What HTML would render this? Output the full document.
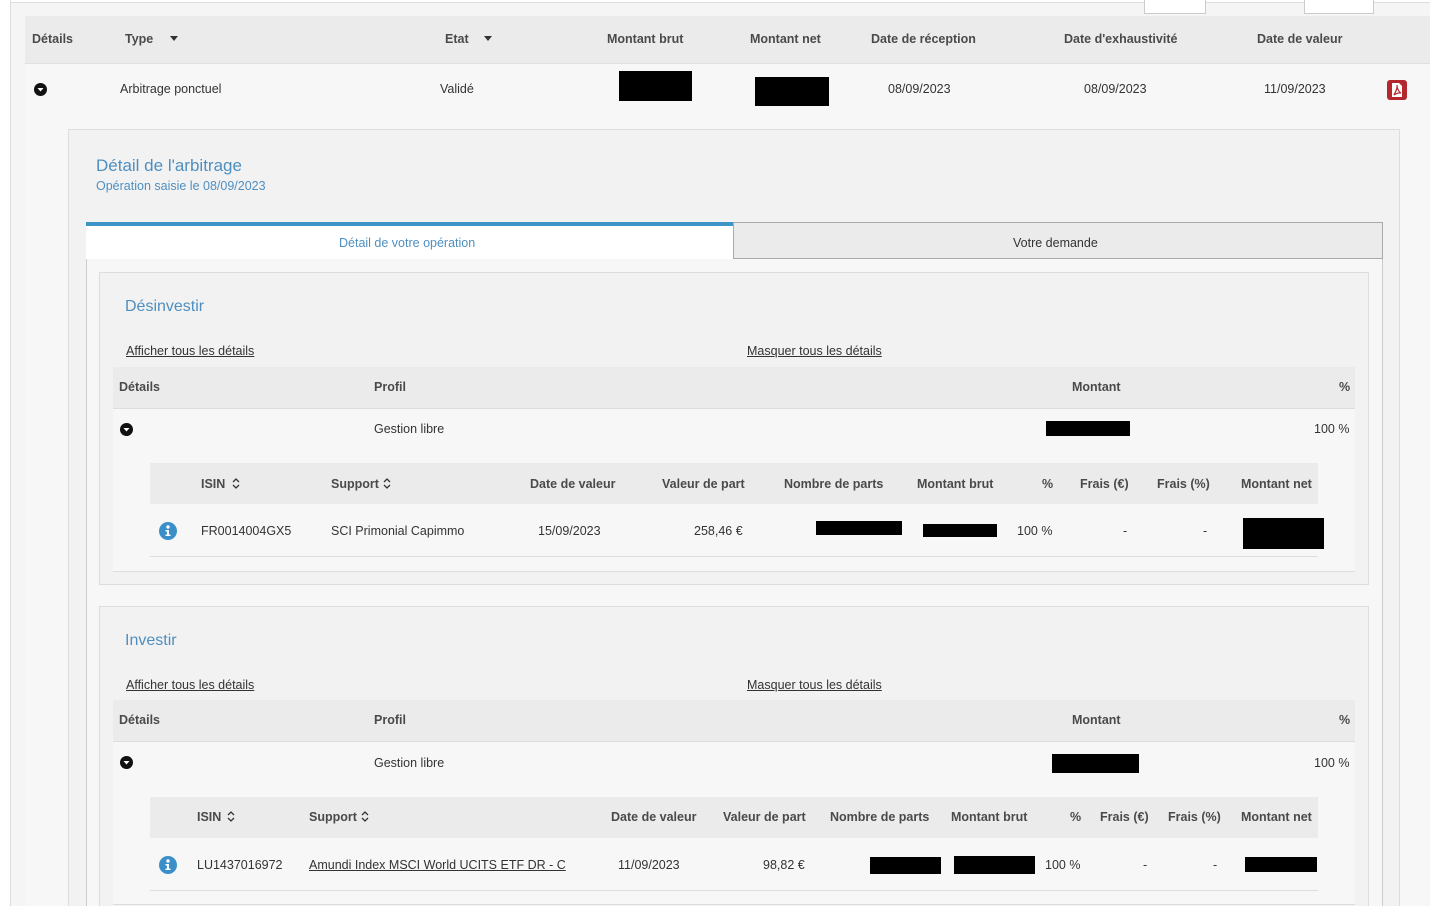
<!DOCTYPE html>
<html><head><meta charset="utf-8">
<style>
*{margin:0;padding:0;box-sizing:border-box}
html,body{width:1430px;height:906px;overflow:hidden}
body{background:#f5f5f5;font-family:"Liberation Sans",Arial,sans-serif;position:relative}
.a{position:absolute}
.t{position:absolute;line-height:16px;white-space:nowrap;font-size:12.5px;color:#333}
.h{font-weight:bold;color:#4a4a4a;font-size:12.5px}
.bk{position:absolute;background:#000}
.u{text-decoration:underline}
.blue{color:#4f8fc0}
</style></head><body>
<div class="a" style="left:0;top:0;width:10px;height:906px;background:#fff"></div>
<div class="a" style="left:10px;top:0;width:1px;height:906px;background:#ddd"></div>
<div class="a" style="left:11px;top:0;width:1419px;height:2px;background:#fff"></div>
<div class="a" style="left:11px;top:2px;width:1419px;height:1px;background:#ddd"></div>
<div class="a" style="left:1144px;top:0;width:62px;height:14px;background:#fff;border:1px solid #ccc;border-top:none"></div>
<div class="a" style="left:1304px;top:0;width:70px;height:14px;background:#fff;border:1px solid #ccc;border-top:none"></div>

<div class="a" style="left:25px;top:16px;width:1405px;height:47px;background:#ebebeb"></div>
<div class="a" style="left:25px;top:63px;width:1405px;height:1px;background:#e0e0e0"></div>
<div class="t h" style="left:32px;top:31px">Détails</div>
<div class="t h" style="left:125px;top:31px">Type</div>
<svg class="a" style="left:170px;top:36px" width="8" height="5"><path d="M0 0H8L4 5Z" fill="#333"/></svg>
<div class="t h" style="left:445px;top:31px">Etat</div>
<svg class="a" style="left:484px;top:36px" width="8" height="5"><path d="M0 0H8L4 5Z" fill="#333"/></svg>
<div class="t h" style="left:607px;top:31px">Montant brut</div>
<div class="t h" style="left:750px;top:31px">Montant net</div>
<div class="t h" style="left:871px;top:31px">Date de réception</div>
<div class="t h" style="left:1064px;top:31px">Date d'exhaustivité</div>
<div class="t h" style="left:1257px;top:31px">Date de valeur</div>

<div class="a" style="left:25px;top:64px;width:1405px;height:842px;background:#f7f7f7"></div>
<svg class="a" style="left:34px;top:83px" width="13" height="13"><circle cx="6.5" cy="6.5" r="6.5" fill="#111"/><path d="M3.5 5H9.5L6.5 8.5Z" fill="#fff"/></svg>
<div class="t" style="left:120px;top:81px">Arbitrage ponctuel</div>
<div class="t" style="left:440px;top:81px">Validé</div>
<div class="bk" style="left:619px;top:71px;width:73px;height:30px"></div>
<div class="bk" style="left:755px;top:77px;width:74px;height:29px"></div>
<div class="t" style="left:888px;top:81px">08/09/2023</div>
<div class="t" style="left:1084px;top:81px">08/09/2023</div>
<div class="t" style="left:1264px;top:81px">11/09/2023</div>
<svg class="a" style="left:1387px;top:80px" width="20" height="20"><rect x="0" y="0" width="20" height="20" rx="3" fill="#b3272d"/><path d="M5 3H12L15 6V17H5Z" fill="#fff"/><path d="M7 15C9 11 10.5 8 10 5C10 9 12 12 14 13C11 12.5 9 13.5 7 15Z" fill="none" stroke="#b3272d" stroke-width="1.2"/></svg>

<div class="a" style="left:68px;top:129px;width:1332px;height:800px;background:#f2f2f2;border:1px solid #ddd"></div>
<div class="t blue" style="left:96px;top:156px;font-size:17px;line-height:20px">Détail de l'arbitrage</div>
<div class="t blue" style="left:96px;top:178px;font-size:12.5px">Opération saisie le 08/09/2023</div>

<div class="a" style="left:86px;top:258px;width:1297px;height:680px;background:#f7f7f7;border:1px solid #ccc;border-top:none"></div>
<div class="a" style="left:86px;top:222px;width:648px;height:37px;background:#fff;border-top:4px solid #3d94c6"></div>
<div class="t blue" style="left:339px;top:235px">Détail de votre opération</div>
<div class="a" style="left:733px;top:222px;width:650px;height:37px;background:#ebebeb;border:1px solid #aaa"></div>
<div class="t" style="left:1013px;top:235px">Votre demande</div>

<div class="a" style="left:99px;top:272px;width:1270px;height:313px;background:#f2f2f2;border:1px solid #ddd"></div>
<div class="t blue" style="left:125px;top:298px;font-size:16px;line-height:18px">Désinvestir</div>
<div class="t u" style="left:126px;top:343px">Afficher tous les détails</div>
<div class="t u" style="left:747px;top:343px">Masquer tous les détails</div>
<div class="a" style="left:113px;top:367px;width:1242px;height:41px;background:#ebebeb"></div>
<div class="a" style="left:113px;top:408px;width:1242px;height:164px;background:#f7f7f7;border-top:1px solid #ddd;border-bottom:1px solid #ddd"></div>
<div class="t h" style="left:119px;top:379px">Détails</div>
<div class="t h" style="left:374px;top:379px">Profil</div>
<div class="t h" style="left:1072px;top:379px">Montant</div>
<div class="t h" style="left:1339px;top:379px">%</div>
<svg class="a" style="left:120px;top:423px" width="13" height="13"><circle cx="6.5" cy="6.5" r="6.5" fill="#111"/><path d="M3.5 5H9.5L6.5 8.5Z" fill="#fff"/></svg>
<div class="t" style="left:374px;top:421px">Gestion libre</div>
<div class="bk" style="left:1046px;top:421px;width:84px;height:15px"></div>
<div class="t" style="left:1314px;top:421px">100 %</div>
<div class="a" style="left:150px;top:463px;width:1168px;height:41px;background:#ebebeb"></div>
<div class="a" style="left:150px;top:556px;width:1168px;height:1px;background:#ddd"></div>
<div class="t h" style="left:201px;top:476px">ISIN</div>
<svg class="a" style="left:232px;top:478px" width="8" height="11"><path d="M1 4L4 1L7 4M1 7L4 10L7 7" fill="none" stroke="#333" stroke-width="1.3"/></svg>
<div class="t h" style="left:331px;top:476px">Support</div>
<svg class="a" style="left:383px;top:478px" width="8" height="11"><path d="M1 4L4 1L7 4M1 7L4 10L7 7" fill="none" stroke="#333" stroke-width="1.3"/></svg>
<div class="t h" style="left:530px;top:476px">Date de valeur</div>
<div class="t h" style="left:662px;top:476px">Valeur de part</div>
<div class="t h" style="left:784px;top:476px">Nombre de parts</div>
<div class="t h" style="left:917px;top:476px">Montant brut</div>
<div class="t h" style="left:1042px;top:476px">%</div>
<div class="t h" style="left:1080px;top:476px">Frais (€)</div>
<div class="t h" style="left:1157px;top:476px">Frais (%)</div>
<div class="t h" style="left:1241px;top:476px">Montant net</div>
<svg class="a" style="left:159px;top:522px" width="18" height="18"><circle cx="9" cy="9" r="9" fill="#3b8fc9"/><circle cx="9" cy="5" r="1.7" fill="#fff"/><path d="M6.5 8H10V12.5H11.5V14H6.5V12.5H8V9.5H6.5Z" fill="#fff"/></svg>
<div class="t" style="left:201px;top:523px">FR0014004GX5</div>
<div class="t" style="left:331px;top:523px">SCI Primonial Capimmo</div>
<div class="t" style="left:538px;top:523px">15/09/2023</div>
<div class="t" style="left:694px;top:523px">258,46 €</div>
<div class="bk" style="left:816px;top:521px;width:86px;height:14px"></div>
<div class="bk" style="left:923px;top:524px;width:74px;height:13px"></div>
<div class="t" style="left:1017px;top:523px">100 %</div>
<div class="t" style="left:1123px;top:523px">-</div>
<div class="t" style="left:1203px;top:523px">-</div>
<div class="bk" style="left:1243px;top:518px;width:81px;height:31px"></div>

<div class="a" style="left:99px;top:606px;width:1270px;height:330px;background:#f2f2f2;border:1px solid #ddd"></div>
<div class="t blue" style="left:125px;top:632px;font-size:16px;line-height:18px">Investir</div>
<div class="t u" style="left:126px;top:677px">Afficher tous les détails</div>
<div class="t u" style="left:747px;top:677px">Masquer tous les détails</div>
<div class="a" style="left:113px;top:700px;width:1242px;height:41px;background:#ebebeb"></div>
<div class="a" style="left:113px;top:741px;width:1242px;height:164px;background:#f7f7f7;border-top:1px solid #ddd;border-bottom:1px solid #ddd"></div>
<div class="t h" style="left:119px;top:712px">Détails</div>
<div class="t h" style="left:374px;top:712px">Profil</div>
<div class="t h" style="left:1072px;top:712px">Montant</div>
<div class="t h" style="left:1339px;top:712px">%</div>
<svg class="a" style="left:120px;top:756px" width="13" height="13"><circle cx="6.5" cy="6.5" r="6.5" fill="#111"/><path d="M3.5 5H9.5L6.5 8.5Z" fill="#fff"/></svg>
<div class="t" style="left:374px;top:755px">Gestion libre</div>
<div class="bk" style="left:1052px;top:754px;width:87px;height:19px"></div>
<div class="t" style="left:1314px;top:755px">100 %</div>
<div class="a" style="left:150px;top:797px;width:1168px;height:41px;background:#ebebeb"></div>
<div class="a" style="left:150px;top:890px;width:1168px;height:1px;background:#ddd"></div>
<div class="t h" style="left:197px;top:809px">ISIN</div>
<svg class="a" style="left:227px;top:811px" width="8" height="11"><path d="M1 4L4 1L7 4M1 7L4 10L7 7" fill="none" stroke="#333" stroke-width="1.3"/></svg>
<div class="t h" style="left:309px;top:809px">Support</div>
<svg class="a" style="left:361px;top:811px" width="8" height="11"><path d="M1 4L4 1L7 4M1 7L4 10L7 7" fill="none" stroke="#333" stroke-width="1.3"/></svg>
<div class="t h" style="left:611px;top:809px">Date de valeur</div>
<div class="t h" style="left:723px;top:809px">Valeur de part</div>
<div class="t h" style="left:830px;top:809px">Nombre de parts</div>
<div class="t h" style="left:951px;top:809px">Montant brut</div>
<div class="t h" style="left:1070px;top:809px">%</div>
<div class="t h" style="left:1100px;top:809px">Frais (€)</div>
<div class="t h" style="left:1168px;top:809px">Frais (%)</div>
<div class="t h" style="left:1241px;top:809px">Montant net</div>
<svg class="a" style="left:159px;top:856px" width="18" height="18"><circle cx="9" cy="9" r="9" fill="#3b8fc9"/><circle cx="9" cy="5" r="1.7" fill="#fff"/><path d="M6.5 8H10V12.5H11.5V14H6.5V12.5H8V9.5H6.5Z" fill="#fff"/></svg>
<div class="t" style="left:197px;top:857px">LU1437016972</div>
<div class="t u" style="left:309px;top:857px">Amundi Index MSCI World UCITS ETF DR - C</div>
<div class="t" style="left:618px;top:857px">11/09/2023</div>
<div class="t" style="left:763px;top:857px">98,82 €</div>
<div class="bk" style="left:870px;top:857px;width:71px;height:17px"></div>
<div class="bk" style="left:954px;top:856px;width:81px;height:18px"></div>
<div class="t" style="left:1045px;top:857px">100 %</div>
<div class="t" style="left:1143px;top:857px">-</div>
<div class="t" style="left:1213px;top:857px">-</div>
<div class="bk" style="left:1245px;top:857px;width:72px;height:15px"></div>
</body></html>
